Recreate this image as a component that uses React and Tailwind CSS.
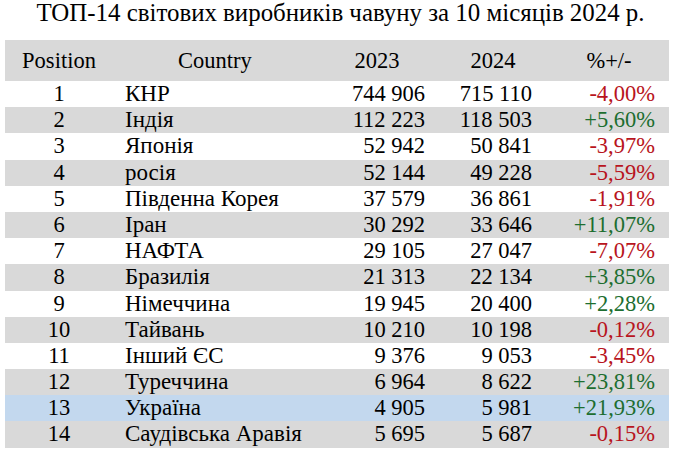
import React from "react";

const rows = [
  ["1", "КНР", "744 906", "715 110", "-4,00%"],
  ["2", "Індія", "112 223", "118 503", "+5,60%"],
  ["3", "Японія", "52 942", "50 841", "-3,97%"],
  ["4", "росія", "52 144", "49 228", "-5,59%"],
  ["5", "Південна Корея", "37 579", "36 861", "-1,91%"],
  ["6", "Іран", "30 292", "33 646", "+11,07%"],
  ["7", "НАФТА", "29 105", "27 047", "-7,07%"],
  ["8", "Бразилія", "21 313", "22 134", "+3,85%"],
  ["9", "Німеччина", "19 945", "20 400", "+2,28%"],
  ["10", "Тайвань", "10 210", "10 198", "-0,12%"],
  ["11", "Інший ЄС", "9 376", "9 053", "-3,45%"],
  ["12", "Туреччина", "6 964", "8 622", "+23,81%"],
  ["13", "Україна", "4 905", "5 981", "+21,93%"],
  ["14", "Саудівська Аравія", "5 695", "5 687", "-0,15%"],
];

export default function App() {
  return (
    <div className="w-[683px] h-[460px] bg-white text-black font-['Liberation_Serif','Times_New_Roman',serif]">
      <div className="h-[40px] pr-[2px] text-center text-[24.9px] leading-[26px] whitespace-nowrap">
        ТОП-14 світових виробників чавуну за 10 місяців 2024 р.
      </div>
      <div className="ml-[5px] w-[664px] text-[22.5px]">
        <div className="grid grid-cols-[108px_204px_120px_112px_120px] h-[41px] items-center bg-[#d9d9d9] leading-[41px]">
          <div className="text-center">Position</div>
          <div className="text-center">Country</div>
          <div className="text-center">2023</div>
          <div className="text-center">2024</div>
          <div className="text-center">%+/-</div>
        </div>
        {rows.map((r, i) => {
          const bg =
            r[0] === "13"
              ? "bg-[#c3d8ee]"
              : i % 2 === 1
              ? "bg-[#d9d9d9]"
              : "bg-white";
          const pos = r[4].startsWith("+");
          return (
            <div
              key={r[0]}
              className={`grid grid-cols-[108px_204px_120px_112px_120px] h-[26.2px] leading-[25px] whitespace-nowrap ${bg}`}
            >
              <div className="text-center">{r[0]}</div>
              <div className="pl-[12px] text-[23px]">{r[1]}</div>
              <div className="text-right pr-[12px]">{r[2]}</div>
              <div className="text-right pr-[17px]">{r[3]}</div>
              <div
                className={`text-right pr-[14px] ${
                  pos ? "text-[#1d6e30]" : "text-[#b81420]"
                }`}
              >
                {r[4]}
              </div>
            </div>
          );
        })}
      </div>
    </div>
  );
}
